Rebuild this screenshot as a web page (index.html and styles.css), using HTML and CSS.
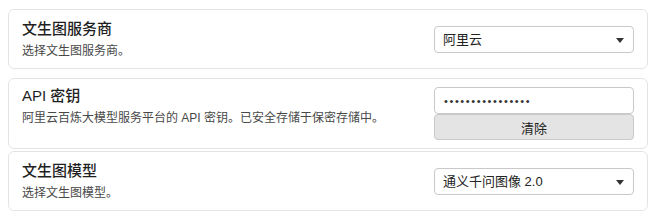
FILE: index.html
```html
<!DOCTYPE html>
<html lang="zh-CN">
<head>
    <meta charset="UTF-8">
    <title>文生图设置</title>
    <link rel="stylesheet" href="styles.css">
</head>
<body>
    <div class="settings">
        <div class="group">
            <div class="row">
                <div class="info">
                    <div class="title">文生图服务商</div>
                    <div class="desc">选择文生图服务商。</div>
                </div>
                <div class="control">
                    <div class="select-wrap">
                        <select class="select">
                            <option>阿里云</option>
                        </select>
                    </div>
                </div>
            </div>
        </div>

        <div class="group">
            <div class="row row-top">
                <div class="info">
                    <div class="title">API 密钥</div>
                    <div class="desc">阿里云百炼大模型服务平台的 API 密钥。已安全存储于保密存储中。</div>
                </div>
                <div class="control">
                    <input type="password" class="input-field" value="xxxxxxxxxxxxxxxx">
                    <button class="button">清除</button>
                </div>
            </div>
            <div class="row">
                <div class="info">
                    <div class="title">文生图模型</div>
                    <div class="desc">选择文生图模型。</div>
                </div>
                <div class="control">
                    <div class="select-wrap">
                        <select class="select">
                            <option>通义千问图像 2.0</option>
                        </select>
                    </div>
                </div>
            </div>
        </div>
    </div>
</body>
</html>
```

FILE: styles.css
```css
body {
    margin: 0;
    padding: 9px 12px 0 8px;
    background: #fff;
    font-family: "Liberation Sans", "Noto Sans CJK SC", sans-serif;
    color: #222;
}

.settings {
    display: flex;
    flex-direction: column;
    gap: 9px;
}

.group {
    display: flex;
    flex-direction: column;
    gap: 2px;
}

.row {
    display: flex;
    align-items: center;
    justify-content: space-between;
    padding: 8px 13px;
    border: 1px solid #e4e4e4;
    border-radius: 6px;
    background: #fff;
}

.row-top .info {
    align-self: flex-start;
    margin-top: -2px;
}

.title {
    font-size: 15px;
    line-height: 22px;
    font-weight: 500;
    color: #1f1f1f;
}

.desc {
    font-size: 12px;
    line-height: 18px;
    margin-top: 2px;
    color: #484848;
}

.control {
    width: 200px;
    display: flex;
    flex-direction: column;
}

.select-wrap {
    position: relative;
}

/* стрелка поверх select */
.select-wrap::after {
    content: "";
    position: absolute;
    right: 10px;
    top: 12px;
    border-left: 4px solid transparent;
    border-right: 4px solid transparent;
    border-top: 5px solid #333;
    pointer-events: none;
}

.select {
    appearance: none;
    -webkit-appearance: none;
    width: 100%;
    height: 27px;
    padding: 0 8px;
    border: 1px solid #c9c9c9;
    border-radius: 4px;
    background: #fff;
    font-family: inherit;
    font-size: 13px;
    color: #222;
    outline: none;
}

.input-field {
    width: 100%;
    height: 27px;
    box-sizing: border-box;
    padding: 0 9px;
    border: 1px solid #c9c9c9;
    border-radius: 4px;
    font-family: "Liberation Sans", sans-serif;
    font-size: 11px;
    letter-spacing: 1.6px;
    color: #333;
    outline: none;
}

.button {
    width: 100%;
    height: 26px;
    border: 1px solid #c9c9c9;
    border-radius: 4px;
    background: #e4e4e4;
    font-family: inherit;
    font-size: 13px;
    color: #222;
    cursor: pointer;
}
```
